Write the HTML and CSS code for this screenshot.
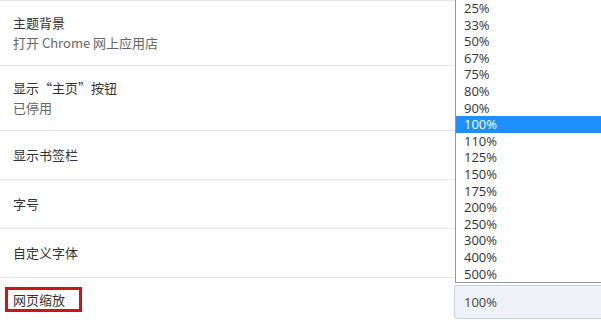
FILE: index.html
```html
<!DOCTYPE html>
<html lang="zh-CN">
<head>
    <meta charset="UTF-8">
    <title>外观设置</title>
    <link rel="stylesheet" href="styles.css">
</head>
<body>

<div class="settings">
    <div class="row row-double">
        <div class="title">主题背景</div>
        <div class="sub">打开 Chrome 网上应用店</div>
    </div>
    <div class="row row-double">
        <div class="title">显示“主页”按钮</div>
        <div class="sub">已停用</div>
    </div>
    <div class="row">
        <div class="title">显示书签栏</div>
    </div>
    <div class="row">
        <div class="title">字号</div>
    </div>
    <div class="row">
        <div class="title">自定义字体</div>
    </div>
    <div class="row row-zoom">
        <div class="title marked">网页缩放</div>
        <div class="select">100%</div>
    </div>

    <ul class="zoom-list">
        <li>25%</li>
        <li>33%</li>
        <li>50%</li>
        <li>67%</li>
        <li>75%</li>
        <li>80%</li>
        <li>90%</li>
        <li class="selected">100%</li>
        <li>110%</li>
        <li>125%</li>
        <li>150%</li>
        <li>175%</li>
        <li>200%</li>
        <li>250%</li>
        <li>300%</li>
        <li>400%</li>
        <li>500%</li>
    </ul>
</div>

</body>
</html>
```

FILE: styles.css
```css
body {
    margin: 0;
    background: #fff;
    font-family: "Noto Sans CJK SC", "Noto Sans", sans-serif;
    font-size: 13px;
    color: #333;
}
.settings {
    position: relative;
    width: 601px;
    height: 324px;
    overflow: hidden;
}
.row {
    display: flex;
    align-items: center;
    border-top: 1px solid #e6e6e6;
    padding: 14px 13px;
    line-height: 20px;
    height: 20px;
}
.row-double {
    flex-direction: column;
    align-items: flex-start;
    justify-content: center;
    padding: 12px 13px;
    height: 40px;
}
.row-zoom {
    justify-content: space-between;
    align-items: flex-start;
    padding: 0 0 0 13px;
    height: 47px;
}
.sub {
    color: #666;
}
.marked {
    outline: 3px solid #c8161d;
    margin: 12px 0 0 -5px;
    padding: 0 14px 0 5px;
    line-height: 19px;
}
.select {
    width: 137px;
    height: 32px;
    line-height: 32px;
    margin-top: 7px;
    padding-left: 9px;
    background: #eef2f6;
    border: 1px solid #c4d4e2;
    border-right: none;
    border-radius: 4px 0 0 4px;
    color: #444;
    font-family: "Open Sans", sans-serif;
}
.zoom-list {
    position: absolute;
    left: 455px;
    top: -1px;
    width: 160px;
    margin: 0;
    padding: 0;
    list-style: none;
    background: #fff;
    border: 1px solid #8c9aa6;
    font-family: "Open Sans", sans-serif;
    font-size: 13px;
}
.zoom-list li {
    height: 16.6px;
    line-height: 16.6px;
    padding-left: 8px;
    color: #333;
}
.zoom-list li.selected {
    background: #1e8fff;
    color: #fff;
}
```
